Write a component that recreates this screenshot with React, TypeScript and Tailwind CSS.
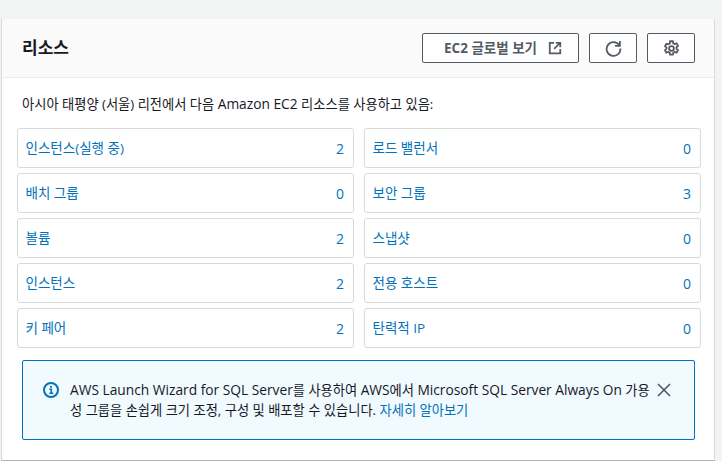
import React from 'react';
import { X } from 'lucide-react';

const rows = [
  [
    { label: '인스턴스(실행 중)', count: 2 },
    { label: '로드 밸런서', count: 0 },
  ],
  [
    { label: '배치 그룹', count: 0 },
    { label: '보안 그룹', count: 3 },
  ],
  [
    { label: '볼륨', count: 2 },
    { label: '스냅샷', count: 0 },
  ],
  [
    { label: '인스턴스', count: 2 },
    { label: '전용 호스트', count: 0 },
  ],
  [
    { label: '키 페어', count: 2 },
    { label: '탄력적 IP', count: 0 },
  ],
];

const ExternalIcon = () => (
  <svg width="14" height="14" viewBox="0 0 16 16" fill="none" stroke="currentColor" strokeWidth="2">
    <path d="M7 2H2v12h12V9" />
    <path d="M9 2h5v5M14 2L7 9" />
  </svg>
);

const RefreshIcon = () => (
  <svg width="17" height="17" viewBox="0 0 16 16" fill="none" stroke="currentColor" strokeWidth="1.7">
    <path d="M13.5 5A6.5 6.5 0 1 0 14.5 8" />
    <path d="M14 1v4.5H9.5" />
  </svg>
);

const GearIcon = () => (
  <svg width="17" height="17" viewBox="0 0 16 16" fill="none" stroke="currentColor" strokeWidth="1.7">
    <circle cx="8" cy="8" r="2.2" />
    <path d="M6.7 1.2h2.6l.4 1.9 1.3.7 1.8-.6 1.3 2.3-1.4 1.3v1.4l1.4 1.3-1.3 2.3-1.8-.6-1.3.7-.4 1.9H6.7l-.4-1.9-1.3-.7-1.8.6-1.3-2.3 1.4-1.3V7.1L1.9 5.8l1.3-2.3 1.8.6 1.3-.7z" />
  </svg>
);

const InfoIcon = () => (
  <svg width="16" height="16" viewBox="0 0 16 16" fill="none" className="shrink-0 mt-[2px]">
    <circle cx="8" cy="8" r="7" stroke="#0073bb" strokeWidth="2" />
    <circle cx="8" cy="4.8" r="1.1" fill="#0073bb" />
    <path d="M6.3 7.2H8.3V11M6.3 11.2h4" stroke="#0073bb" strokeWidth="1.6" />
  </svg>
);

export default function App() {
  return (
    <div className="h-[461px] w-[722px] overflow-hidden bg-[#f2f3f3] pt-[19px] pl-px pr-[7px] font-['Open_Sans','Noto_Sans_CJK_KR',sans-serif] text-[13.25px] text-[#16191f]">
      <div className="h-[442px] border-l border-r border-b border-[#d5dbdb] border-b-[#aab7b8] bg-white">
        <div className="flex h-[59px] items-center justify-between border-b border-[#eaeded] bg-[#fafafa] pl-[20px] pr-[19px]">
          <h2 className="text-[17px] leading-[22px] font-bold">리소스</h2>
          <div className="flex gap-[10px]">
            <button className="flex h-[30px] w-[157px] items-center justify-center gap-[11px] rounded-[2px] border border-[#545b64] bg-white pl-[5px] text-[13.5px] font-bold text-[#545b64]">
              EC2 글로벌 보기
              <ExternalIcon />
            </button>
            <button className="flex h-[30px] w-[48px] items-center justify-center rounded-[2px] border border-[#545b64] bg-white text-[#545b64]">
              <RefreshIcon />
            </button>
            <button className="flex h-[30px] w-[48px] items-center justify-center rounded-[2px] border border-[#545b64] bg-white text-[#545b64]">
              <GearIcon />
            </button>
          </div>
        </div>

        <div className="pt-[16px] pl-[15px] pr-[13px]">
          <p className="pl-[5px] leading-[20px]">
            아시아 태평양 (서울) 리전에서 다음 <span className="text-[13.75px]">Amazon EC2</span> 리소스를 사용하고 있음:
          </p>
          <div className="mt-[14px] flex flex-col gap-[5px]">
            {rows.map((row, i) => (
              <div key={i} className="grid grid-cols-2 gap-[10px]">
                {row.map((cell) => (
                  <div
                    key={cell.label}
                    className="flex h-[40px] items-center justify-between rounded-[3px] border border-[#d5dbdb] bg-white pl-[7.5px] pr-[9px] text-[13.5px] text-[#0073bb]"
                  >
                    <span>{cell.label}</span>
                    <span className="text-[14px]">{cell.count}</span>
                  </div>
                ))}
              </div>
            ))}
          </div>
          <div className="mt-[12px] ml-[5px] flex h-[80px] w-[673px] gap-[11px] rounded-[2px] border border-[#0073bb] bg-[#f1faff] pt-[19px] pl-[20px] pr-[12px]">
            <InfoIcon />
            <p className="w-[581px] leading-[20px]">
              <span className="text-[13.75px]">AWS Launch Wizard for SQL Server</span>를 사용하여 <span className="text-[13.75px]">AWS</span>에서 <span className="text-[13.75px]">Microsoft SQL Server Always On</span> 가용 성 그룹을 손쉽게 크기 조정, 구성 및 배포할 수 있습니다. <a className="text-[#0073bb]">자세히 알아보기</a>
            </p>
            <X className="ml-[-9px] shrink-0 mt-[-1px] text-[#545b64]" size={22} strokeWidth={1.8} />
          </div>
        </div>
      </div>
    </div>
  );
}
